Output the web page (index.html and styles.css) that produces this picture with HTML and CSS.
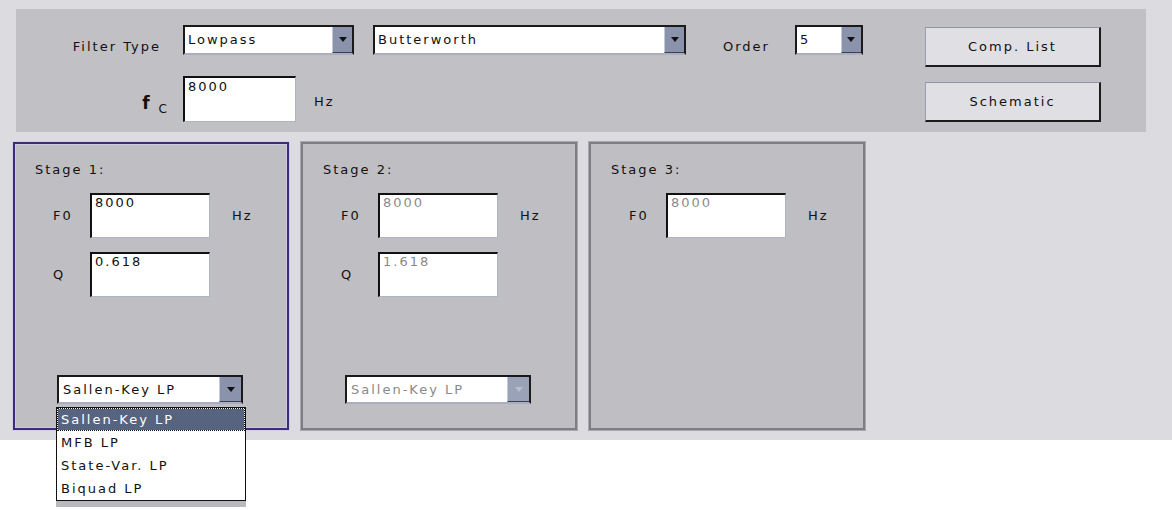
FILE: index.html
```html
<!DOCTYPE html>
<html lang="en">

<head>
    <meta charset="UTF-8">
    <meta name="viewport" content="width=device-width, initial-scale=1.0">
    <title>Filter Designer</title>
    <link rel="stylesheet" href="styles.css">
</head>

<body>
    <div class="app">
        <!-- filter settings -->
        <div class="filter-bar">
            <div class="filter-grid">
                <label class="lbl lbl-type">Filter Type</label>
                <div class="row">
                    <div class="combo w-type"><span>Lowpass</span><i class="arrow"></i></div>
                    <div class="combo w-resp"><span>Butterworth</span><i class="arrow"></i></div>
                    <label class="lbl lbl-order">Order</label>
                    <div class="combo w-order"><span>5</span><i class="arrow"></i></div>
                </div>
                <label class="lbl lbl-fc"><b>f</b><sub>C</sub></label>
                <div class="row">
                    <input class="txt w-fc" type="text" value="8000">
                    <span class="lbl hz-fc">Hz</span>
                </div>
            </div>
            <div class="actions">
                <button class="btn">Comp. List</button>
                <button class="btn">Schematic</button>
            </div>
        </div>

        <!-- stages -->
        <div class="stages">
            <div class="stage active">
                <div class="stage-title">Stage 1:</div>
                <div class="field">
                    <label>F0</label>
                    <input class="txt" type="text" value="8000">
                    <span class="hz">Hz</span>
                </div>
                <div class="field">
                    <label>Q</label>
                    <input class="txt" type="text" value="0.618">
                </div>
                <div class="combo stage-combo">
                    <span>Sallen-Key LP</span><i class="arrow"></i>
                    <ul class="menu">
                        <li class="opt sel">Sallen-Key LP</li>
                        <li class="opt">MFB LP</li>
                        <li class="opt">State-Var. LP</li>
                        <li class="opt">Biquad LP</li>
                    </ul>
                </div>
            </div>

            <div class="stage">
                <div class="stage-title">Stage 2:</div>
                <div class="field">
                    <label>F0</label>
                    <input class="txt off" type="text" value="8000">
                    <span class="hz">Hz</span>
                </div>
                <div class="field">
                    <label>Q</label>
                    <input class="txt off" type="text" value="1.618">
                </div>
                <div class="combo stage-combo off">
                    <span>Sallen-Key LP</span><i class="arrow"></i>
                </div>
            </div>

            <div class="stage">
                <div class="stage-title">Stage 3:</div>
                <div class="field">
                    <label>F0</label>
                    <input class="txt off" type="text" value="8000">
                    <span class="hz">Hz</span>
                </div>
            </div>
        </div>
    </div>
</body>

</html>
```

FILE: styles.css
```css
html,
body {
    min-height: 100vh;
}

body {
    margin: 0;
    background-color: #ffffff;
    font: 13px/16px "DejaVu Sans", sans-serif;
    letter-spacing: 2px;
    color: #111111;
}

.app {
    background-color: #dcdbe0;
    padding: 9px 0 10px;
}

/* top bar */
.filter-bar {
    display: flex;
    height: 123px;
    margin: 0 26px 0 16px;
    background-color: #c1c0c5;
}

.filter-grid {
    display: grid;
    grid-template-columns: 145px auto;
    grid-template-rows: 30px 46px;
    column-gap: 22px;
    row-gap: 21px;
    margin-top: 16px;
    align-content: start;
}

.row {
    display: flex;
    align-items: center;
}

.lbl-type {
    justify-self: end;
    align-self: end;
}

.lbl-order {
    align-self: end;
    margin: 0 25px 0 37px;
}

.lbl-fc {
    justify-self: end;
    align-self: center;
    margin-right: -8px;
    padding-top: 14px;
}

.lbl-fc b {
    font-size: 17px;
    letter-spacing: 0;
}

.lbl-fc sub {
    font-size: 12px;
    vertical-align: -4px;
    margin-left: 9px;
}

.hz-fc {
    margin-left: 18px;
    padding-top: 6px;
}

.w-type {
    width: 171px;
    height: 30px;
    margin-right: 19px;
}

.w-resp {
    width: 313px;
    height: 30px;
}

.w-order {
    width: 68px;
    height: 30px;
}

.w-fc {
    width: 113px;
    height: 46px;
}

.actions {
    display: flex;
    flex-direction: column;
    gap: 15px;
    margin: 18px 45px 0 auto;
}

.btn {
    width: 176px;
    height: 40px;
    padding: 0;
    background-color: #e0dfe4;
    border-style: solid;
    border-width: 1px 2px 2px 1px;
    border-color: #8f95a8 #1c1c1c #1c1c1c #9a9fae;
    font: inherit;
    letter-spacing: 2px;
    color: #111111;
}

/* inputs */
.txt {
    box-sizing: border-box;
    margin: 0;
    padding: 0 3px 27px;
    background-color: #ffffff;
    border-style: solid;
    border-width: 2px 1px 1px 2px;
    border-color: #111111 #aeb3c6 #aeb3c6 #111111;
    font: inherit;
    letter-spacing: 2px;
    color: #111111;
    outline: none;
}

.txt.off {
    color: #8a8a8a;
}

/* combo boxes */
.combo {
    display: flex;
    box-sizing: border-box;
    background-color: #ffffff;
    border: 2px solid #1a1a1a;
    border-bottom-color: #a9aec0;
}

.combo span {
    flex: 1;
    align-self: center;
    padding-left: 3px;
    white-space: nowrap;
    overflow: hidden;
}

.combo .arrow {
    display: flex;
    align-items: center;
    justify-content: center;
    width: 19px;
    background-color: #8a93ab;
    border-left: 1px solid #c4c9d7;
    border-bottom: 1px solid #3a4054;
}

.combo .arrow::after {
    content: "";
    border-top: 5px solid #111111;
    border-left: 4px solid transparent;
    border-right: 4px solid transparent;
}

.combo.off span {
    color: #8a8a8a;
}

.combo.off .arrow {
    background-color: #9aa2b8;
}

.combo.off .arrow::after {
    border-top-color: #b9bfcf;
}

/* stages */
.stages {
    display: flex;
    gap: 12px;
    margin: 10px 0 0 13px;
}

.stage {
    box-sizing: border-box;
    width: 276px;
    height: 288px;
    padding-top: 18px;
    background-color: #bfbec3;
    border: 2px solid #7e7d83;
    box-shadow: 0 0 0 1px #a9a8ad;
}

.stage.active {
    border-color: #3e2c7a;
    box-shadow: 0 0 0 1px #d2cde7, inset 0 0 0 1px #cdc7e4;
}

.stage-title {
    padding-left: 20px;
}

.field {
    display: flex;
    align-items: center;
    margin: 15px 0 0 38px;
}

.field + .field {
    margin-top: 14px;
}

.field label {
    width: 37px;
}

.field .txt {
    width: 120px;
    height: 45px;
}

.field .hz {
    margin-left: 22px;
}

.stage-combo {
    position: relative;
    width: 186px;
    height: 29px;
    margin: 78px 0 0 42px;
}

.stage-combo span {
    padding-left: 4px;
}

.stage-combo .arrow {
    width: 21px;
}

/* open drop-down list */
.menu {
    position: absolute;
    left: -3px;
    top: 30px;
    z-index: 2;
    box-sizing: border-box;
    width: 190px;
    margin: 0;
    padding: 0;
    list-style: none;
    background-color: #ffffff;
    border: 1px solid #111111;
    box-shadow: 0 6px 0 #b9b8bd;
}

.opt {
    box-sizing: border-box;
    height: 23px;
    line-height: 23px;
    padding-left: 4px;
    white-space: nowrap;
}

.opt.sel {
    line-height: 21px;
    padding-left: 3px;
    background-color: #56647f;
    background-clip: padding-box;
    border: 1px dotted #111111;
    color: #ffffff;
}
```
